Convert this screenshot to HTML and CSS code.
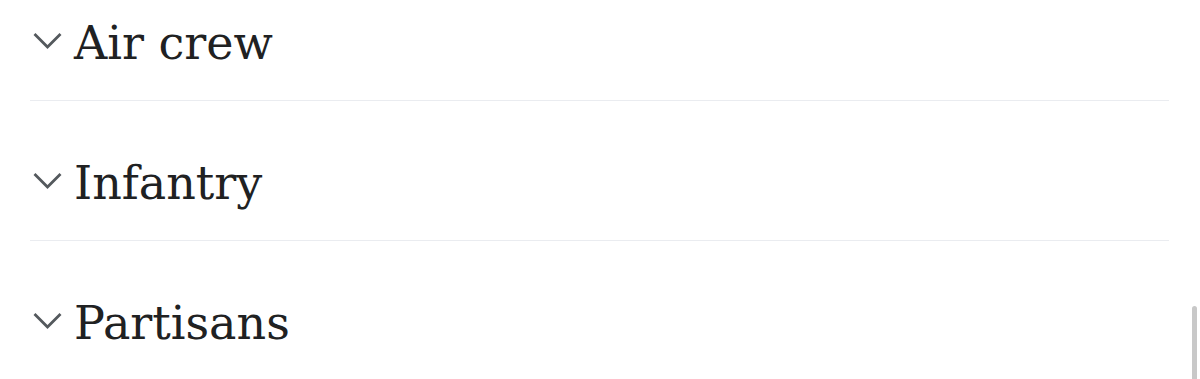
FILE: index.html
```html
<!DOCTYPE html>
<html lang="en">
  <head>
    <meta charset="UTF-8" />
    <meta name="viewport" content="width=device-width, initial-scale=1.0" />
    <title>Sections</title>
    <link rel="stylesheet" href="styles.css">
  </head>
  <body>
    <div class="section-list">
      <div class="section">
        <h2 class="section-heading">
          <svg class="chevron" viewBox="0 0 30 18" aria-hidden="true">
            <polyline points="2,3 15,16 28,3" />
          </svg>
          <span>Air crew</span>
        </h2>
      </div>
      <div class="section">
        <h2 class="section-heading">
          <svg class="chevron" viewBox="0 0 30 18" aria-hidden="true">
            <polyline points="2,3 15,16 28,3" />
          </svg>
          <span>Infantry</span>
        </h2>
      </div>
      <div class="section last">
        <h2 class="section-heading">
          <svg class="chevron" viewBox="0 0 30 18" aria-hidden="true">
            <polyline points="2,3 15,16 28,3" />
          </svg>
          <span>Partisans</span>
        </h2>
      </div>
    </div>
    <div class="scroll-thumb"></div>
  </body>
</html>
```

FILE: styles.css
```css
* {
  margin: 0;
  padding: 0;
  box-sizing: border-box;
}
body {
  font-family: "DejaVu Serif", "Liberation Serif", serif;
  background: #fff;
  color: #202122;
  overflow: hidden;
}
.section-list {
  display: flex;
  flex-direction: column;
  gap: 55px;
  padding: 16px 31px 0 30px;
}
.section {
  border-bottom: 1px solid #eaecf0;
  padding-bottom: 30px;
}
.section.last {
  border-bottom: none;
}
.section-heading {
  display: flex;
  align-items: flex-start;
  gap: 11px;
  font-size: 46px;
  font-weight: normal;
  line-height: 54px;
}
.chevron {
  width: 31px;
  height: 18px;
  flex-shrink: 0;
  margin: 15px 0 0 2px;
}
.chevron polyline {
  fill: none;
  stroke: #54595d;
  stroke-width: 2.8;
}
.scroll-thumb {
  position: fixed;
  right: 3px;
  top: 306px;
  width: 5px;
  height: 80px;
  border-radius: 3px;
  background: #c8c8c8;
}
```
